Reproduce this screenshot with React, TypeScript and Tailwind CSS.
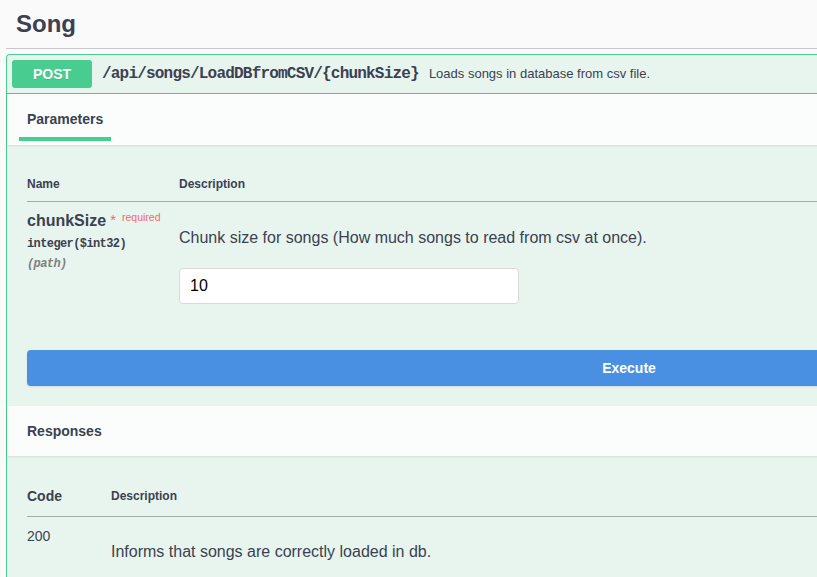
export default function App() {
  const sans = { fontFamily: '"Liberation Sans", Arial, sans-serif' };
  const mono = { fontFamily: '"Liberation Mono", "DejaVu Sans Mono", monospace' };

  return (
    <div className="w-screen h-screen overflow-hidden bg-[#fafafa] text-[#3b4151]" style={sans}>
      <div className="w-[1258px] px-[6px]">
        {/* tag header */}
        <h3 className="h-[49px] border-b border-[#c6c7cb] pl-[10px] pt-[9px] text-[24px] font-bold leading-[30px]">
          Song
        </h3>

        {/* operation block */}
        <div className="mt-[5px] rounded-t-[4px] border border-b-0 border-[#49cc90] bg-[#e8f5ef]">
          {/* summary */}
          <div className="flex h-[39px] items-center border-b border-[#49cc90] px-[5px]">
            <span className="flex h-[28px] w-[80px] items-center justify-center rounded-[3px] bg-[#49cc90] text-[14px] font-bold text-white [text-shadow:0_1px_0_rgba(0,0,0,0.1)]">
              POST
            </span>
            <span className="ml-[10px] text-[16px] font-bold tracking-[-0.8px]" style={mono}>
              /api/songs/LoadDBfromCSV/{"{chunkSize}"}
            </span>
            <span className="ml-[10px] text-[13px]">Loads songs in database from csv file.</span>
          </div>

          {/* parameters header */}
          <div className="flex h-[51px] items-center bg-[#fafdfc] px-5 shadow-[0_1px_2px_rgba(0,0,0,0.1)]">
            <div className="relative">
              <h4 className="text-[14px] font-bold">Parameters</h4>
              <div className="absolute left-[-8px] right-[-8px] top-[28px] h-[4px] bg-[#49cc90]" />
            </div>
          </div>

          {/* parameters body */}
          <div className="px-5 pt-[21px] pb-5">
            <div className="flex h-[36px] items-center border-b border-[#a3adab] text-[12px] font-bold">
              <div className="w-[152px]">Name</div>
              <div>Description</div>
            </div>
            <div className="flex pt-[10px]">
              <div className="w-[152px]">
                <div className="flex items-start">
                  <span className="text-[16px] font-bold leading-[18px]">chunkSize</span>
                  <span className="ml-[4px] text-[15px] leading-[15px] text-[#f36a6a]">*</span>
                  <span className="ml-[6px] text-[10.5px] leading-[10px] text-[#f36a6a]">required</span>
                </div>
                <div className="mt-[4px] text-[12px] font-bold leading-[20px] tracking-[-0.6px]" style={mono}>
                  integer($int32)
                </div>
                <div className="text-[12px] font-bold italic leading-[20px] tracking-[-0.6px] text-[#808080]" style={mono}>
                  (path)
                </div>
              </div>
              <div>
                <p className="mt-[17px] text-[16px] leading-[18px]">
                  Chunk size for songs (How much songs to read from csv at once).
                </p>
                <input
                  defaultValue="10"
                  className="mt-[21px] h-[36px] w-[340px] rounded-[4px] border border-[#d9d9d9] bg-white px-[10px] text-[16px] text-black outline-none"
                  style={sans}
                />
              </div>
            </div>
            <button className="mt-[46px] flex h-[36px] w-full items-center justify-center rounded-[4px] bg-[#4990e2] text-[14px] font-bold text-white shadow-[0_1px_2px_rgba(0,0,0,0.1)]">
              Execute
            </button>
          </div>

          {/* responses header */}
          <div className="flex h-[50px] items-center bg-[#fafdfc] px-5 shadow-[0_1px_2px_rgba(0,0,0,0.1)]">
            <h4 className="text-[14px] font-bold">Responses</h4>
          </div>

          {/* responses body */}
          <div className="px-5 pt-5 pb-10">
            <div className="flex h-[41px] items-center border-b border-[#a3adab]">
              <div className="w-[84px] text-[14px] font-bold">Code</div>
              <div className="text-[12px] font-bold">Description</div>
            </div>
            <div className="flex pt-[10px]">
              <div className="w-[84px] text-[14px] leading-[18px]">200</div>
              <p className="mt-[16px] text-[16px] leading-[18px]">Informs that songs are correctly loaded in db.</p>
            </div>
          </div>
        </div>
      </div>
    </div>
  );
}
